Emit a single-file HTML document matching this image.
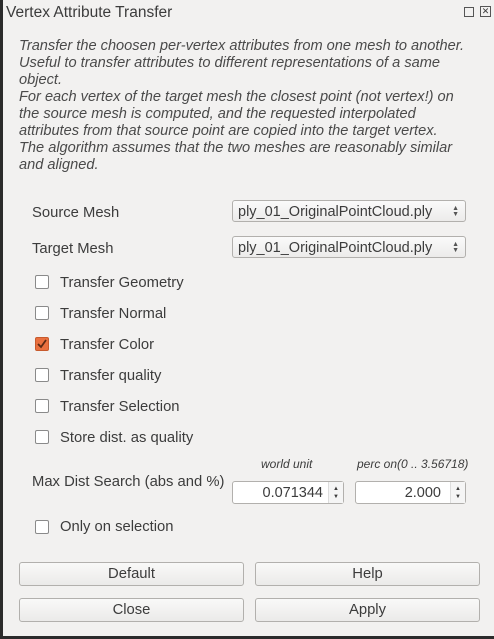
<html><head><style>
body{margin:0;width:494px;height:639px;background:#2b2b2b;overflow:hidden;font-family:"Liberation Sans",sans-serif;color:#3c3c3c}
#w{position:absolute;left:3px;top:0;width:491px;height:636px;background:#f2f1f0}
.a{position:absolute;white-space:nowrap}
.desc{position:absolute;left:16px;top:38px;font-style:italic;font-size:14.6px;line-height:17px;color:#4a4a4a;white-space:nowrap}
.cb{position:absolute;left:32px;width:12px;height:12px;border:1px solid #8a8a8a;border-radius:2px;background:#fff}
.lbl{position:absolute;font-size:14.8px}
.combo{position:absolute;left:229px;height:22px;border:1px solid #b2b0ad;border-radius:3px;background:linear-gradient(#fafafa,#ecebea);font-size:14.5px;line-height:22px;padding-left:5px;box-sizing:border-box;width:234px}
.arr{position:absolute;right:6px;top:5px;font-size:7px;line-height:6px;color:#555}
.spin{position:absolute;height:23px;border:1px solid #b2b0ad;border-radius:3px;background:#fff;box-sizing:border-box;font-size:14.5px;line-height:22px;text-align:right}
.btn{position:absolute;height:24px;border:1px solid #b2b0ad;border-radius:3px;background:linear-gradient(#f9f9f8,#ebeae9);box-sizing:border-box;text-align:center;font-size:14.8px;line-height:22px}
</style></head><body><div id="w">
<div class="a" style="left:3px;top:4px;font-size:15.5px;color:#3c3c3c">Vertex Attribute Transfer</div>
<div class="a" style="left:461px;top:7px;width:8px;height:8px;border:1px solid #555"></div>
<div class="a" style="left:477px;top:6px;width:9px;height:9px;border:1px solid #555;font-size:9px;line-height:9px;text-align:center">✕</div>
<div class="desc">Transfer the choosen per-vertex attributes from one mesh to another.<br>Useful to transfer attributes to different representations of a same<br>object.<br>For each vertex of the target mesh the closest point (not vertex!) on<br>the source mesh is computed, and the requested interpolated<br>attributes from that source point are copied into the target vertex.<br>The algorithm assumes that the two meshes are reasonably similar<br>and aligned.</div>
<div class="lbl" style="left:29px;top:205px">Source Mesh</div>
<div class="combo" style="top:200px">ply_01_OriginalPointCloud.ply<div class="arr">▲<br>▼</div></div>
<div class="lbl" style="left:29px;top:241px">Target Mesh</div>
<div class="combo" style="top:236px">ply_01_OriginalPointCloud.ply<div class="arr">▲<br>▼</div></div>
<div class="cb" style="top:275px"></div><div class="lbl" style="left:57px;top:275px">Transfer Geometry</div>
<div class="cb" style="top:306px"></div><div class="lbl" style="left:57px;top:306px">Transfer Normal</div>
<div class="cb" style="top:337px;background:#e9703f;border-color:#c75a2d"><svg width="12" height="12" style="position:absolute;left:0;top:0"><path d="M2 6 L5 9 L10 2" stroke="#5a2a15" stroke-width="1.8" fill="none"/></svg></div><div class="lbl" style="left:57px;top:337px">Transfer Color</div>
<div class="cb" style="top:368px"></div><div class="lbl" style="left:57px;top:368px">Transfer quality</div>
<div class="cb" style="top:399px"></div><div class="lbl" style="left:57px;top:399px">Transfer Selection</div>
<div class="cb" style="top:430px"></div><div class="lbl" style="left:57px;top:430px">Store dist. as quality</div>
<div class="a" style="left:258px;top:457px;font-size:12px;font-style:italic">world unit</div>
<div class="a" style="left:354px;top:457px;font-size:12px;font-style:italic">perc on(0 .. 3.56718)</div>
<div class="lbl" style="left:29px;top:474px">Max Dist Search (abs and %)</div>
<div class="spin" style="left:229px;top:481px;width:112px"><span style="margin-right:20px">0.071344</span><div style="position:absolute;right:0;top:0;width:15px;height:21px;border-left:1px solid #ddd;background:#f5f5f5;font-size:6px;line-height:8px;text-align:center;padding-top:3px;box-sizing:border-box">▲<br>▼</div></div>
<div class="spin" style="left:352px;top:481px;width:111px"><span style="margin-right:24px">2.000</span><div style="position:absolute;right:0;top:0;width:15px;height:21px;border-left:1px solid #ddd;background:#f5f5f5;font-size:6px;line-height:8px;text-align:center;padding-top:3px;box-sizing:border-box">▲<br>▼</div></div>
<div class="cb" style="top:520px"></div><div class="lbl" style="left:57px;top:519px">Only on selection</div>
<div class="btn" style="left:16px;top:562px;width:225px">Default</div>
<div class="btn" style="left:252px;top:562px;width:225px">Help</div>
<div class="btn" style="left:16px;top:598px;width:225px">Close</div>
<div class="btn" style="left:252px;top:598px;width:225px">Apply</div>
</div></body></html>
